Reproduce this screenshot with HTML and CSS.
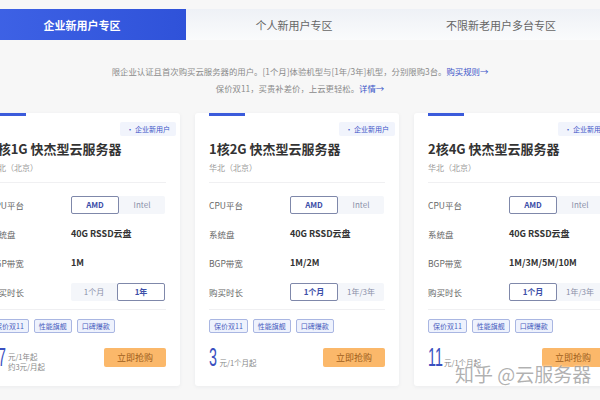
FILE: index.html
```html
<!DOCTYPE html>
<html lang="zh-CN">
<head>
<meta charset="utf-8">
<title>企业新用户专区</title>
<link rel="stylesheet" href="styles.css">
</head>
<body>
<div class="page">
  <div class="tabs">
    <div class="tab tab-active tab-a">企业新用户专区</div>
    <div class="tab tab-b">个人新用户专区</div>
    <div class="tab tab-c">不限新老用户多台专区</div>
  </div>

  <div class="desc">
    <p>限企业认证且首次购买云服务器的用户。[1个月]体验机型与[1年/3年]机型，分别限购3台。<a class="link">购买规则→</a></p>
    <p>保价双11，买贵补差价，上云更轻松。<a class="link">详情→</a></p>
  </div>

  <div class="cards">
    <div class="card">
      <div class="accent"></div>
      <div class="badge">· 企业新用户</div>
      <div class="title">1核1G 快杰型云服务器</div>
      <div class="region">华北（北京）</div>
      <div class="rows">
        <div class="row"><span class="label">CPU平台</span><div class="seg"><span class="opt sel">AMD</span><span class="opt">Intel</span></div></div>
        <div class="row"><span class="label">系统盘</span><span class="value">40G RSSD云盘</span></div>
        <div class="row"><span class="label">BGP带宽</span><span class="value">1M</span></div>
        <div class="row"><span class="label">购买时长</span><div class="seg"><span class="opt">1个月</span><span class="opt sel">1年</span></div></div>
      </div>
      <div class="tags"><span class="tag">保价双11</span><span class="tag">性能旗舰</span><span class="tag">口碑爆款</span></div>
      <div class="foot">
        <div class="price"><span class="num num2">37</span><span class="unit unit-two"><span>元/1年起</span><span>约3元/月起</span></span></div>
        <button class="buy">立即抢购</button>
      </div>
    </div>

    <div class="card">
      <div class="accent"></div>
      <div class="badge">· 企业新用户</div>
      <div class="title">1核2G 快杰型云服务器</div>
      <div class="region">华北（北京）</div>
      <div class="rows">
        <div class="row"><span class="label">CPU平台</span><div class="seg"><span class="opt sel">AMD</span><span class="opt">Intel</span></div></div>
        <div class="row"><span class="label">系统盘</span><span class="value">40G RSSD云盘</span></div>
        <div class="row"><span class="label">BGP带宽</span><span class="value">1M/2M</span></div>
        <div class="row"><span class="label">购买时长</span><div class="seg"><span class="opt sel">1个月</span><span class="opt">1年/3年</span></div></div>
      </div>
      <div class="tags"><span class="tag">保价双11</span><span class="tag">性能旗舰</span><span class="tag">口碑爆款</span></div>
      <div class="foot">
        <div class="price"><span class="num num1">3</span><span class="unit">元/1个月起</span></div>
        <button class="buy">立即抢购</button>
      </div>
    </div>

    <div class="card">
      <div class="accent"></div>
      <div class="badge">· 企业新用户</div>
      <div class="title">2核4G 快杰型云服务器</div>
      <div class="region">华北（北京）</div>
      <div class="rows">
        <div class="row"><span class="label">CPU平台</span><div class="seg"><span class="opt sel">AMD</span><span class="opt">Intel</span></div></div>
        <div class="row"><span class="label">系统盘</span><span class="value">40G RSSD云盘</span></div>
        <div class="row"><span class="label">BGP带宽</span><span class="value">1M/3M/5M/10M</span></div>
        <div class="row"><span class="label">购买时长</span><div class="seg"><span class="opt sel">1个月</span><span class="opt">1年/3年</span></div></div>
      </div>
      <div class="tags"><span class="tag">保价双11</span><span class="tag">性能旗舰</span><span class="tag">口碑爆款</span></div>
      <div class="foot">
        <div class="price"><span class="num num2">11</span><span class="unit">元/1个月起</span></div>
        <button class="buy">立即抢购</button>
      </div>
    </div>
  </div>

  <div class="watermark">知乎 @云服务器</div>
</div>
</body>
</html>
```

FILE: styles.css
```css
* { box-sizing: border-box; }
html, body { margin: 0; padding: 0; }
body {
  width: 600px;
  height: 400px;
  overflow: hidden;
  background: #f7f7f7;
  font-family: "Noto Sans CJK SC", "Noto Sans", sans-serif;
  color: #333;
}
.page {
  position: relative;
  width: 600px;
  height: 400px;
  padding-top: 9px;
}
.tabs {
  display: flex;
  margin-left: -22px;
  height: 31px;
}
.tab {
  display: flex;
  align-items: center;
  justify-content: center;
  font-size: 11px;
  color: #666;
  background: linear-gradient(180deg, #eef1f6 0%, #fafbfc 100%);
}
.tab-a { width: 212px; }
.tab-b { width: 220px; }
.tab-c { width: 202px; }
.tab-active {
  background: linear-gradient(90deg, #3f63e6 0%, #2f52d9 100%);
  color: #fff;
  font-weight: 700;
}
.desc {
  margin-top: 23px;
  text-align: center;
  font-size: 8.4px;
  color: #8a8a8a;
  line-height: 17px;
}
.desc p { margin: 0; }
.link { color: #3b55c8; }

.cards {
  display: flex;
  gap: 15px;
  margin-left: -24px;
  margin-top: 16px;
}
.card {
  position: relative;
  width: 204px;
  height: 273px;
  flex: none;
  background: #fff;
  border-radius: 3px;
  box-shadow: 0 1px 4px rgba(40, 50, 80, 0.06);
  padding: 0 14px;
}
.accent {
  width: 36px;
  height: 3px;
  background: #3b5bdb;
}
.badge {
  position: absolute;
  top: 9px;
  right: 4px;
  height: 14px;
  line-height: 14px;
  padding: 0 6px;
  font-size: 7px;
  color: #3b55c8;
  background: #f1f4fc;
  border-radius: 2px;
}
.title {
  margin-top: 24px;
  font-size: 13px;
  font-weight: 700;
  color: #333;
  line-height: 18px;
}
.region {
  margin-top: 3px;
  font-size: 8px;
  color: #999;
  line-height: 14px;
}
.rows {
  margin-top: 7px;
  border-top: 1px solid #f0f0f2;
  border-bottom: 1px solid #f0f0f2;
  padding: 7px 0 3px;
}
.row {
  display: flex;
  align-items: center;
  height: 29px;
}
.label {
  width: 81px;
  font-size: 8.5px;
  color: #666;
}
.value {
  font-size: 9px;
  font-weight: 700;
  color: #333;
}
.seg {
  display: flex;
  width: 94px;
  height: 18px;
  background: #f4f6fa;
  border-radius: 2px;
}
.opt {
  flex: 1;
  display: flex;
  align-items: center;
  justify-content: center;
  font-size: 8px;
  color: #8a8fa8;
}
.opt.sel {
  background: #fff;
  border: 1px solid #7f88aa;
  border-radius: 2px;
  color: #3d4fa8;
  font-weight: 700;
}
.tags {
  display: flex;
  gap: 5px;
  margin-top: 9px;
}
.tag {
  height: 14px;
  line-height: 12px;
  padding: 0 4px;
  font-size: 7px;
  color: #4a5fc0;
  background: #eef2fd;
  border: 1px solid #a9b6e2;
  border-radius: 2px;
}
.foot {
  display: flex;
  justify-content: space-between;
  align-items: center;
  margin-top: 13px;
}
.price {
  display: flex;
  align-items: flex-end;
  height: 22px;
}
.num {
  display: inline-block;
  font-family: "Liberation Sans", sans-serif;
  font-size: 26px;
  line-height: 22px;
  color: #3a4fc0;
  transform: scaleX(0.55);
  transform-origin: left bottom;
}
.num1 { margin-right: -5px; }
.num2 { margin-right: -12px; }
.unit {
  font-size: 7.5px;
  color: #888;
  line-height: 10px;
  margin-left: 1px;
}
.unit-two {
  display: flex;
  flex-direction: column;
  margin-bottom: -4px;
}
.buy {
  width: 62px;
  height: 19px;
  border: none;
  border-radius: 2px;
  background: #fbb86a;
  color: #a05f1c;
  font-family: inherit;
  font-size: 9px;
  padding: 0;
}
.watermark {
  position: absolute;
  left: 455px;
  top: 360px;
  font-size: 19px;
  color: rgba(110, 110, 110, 0.55);
  text-shadow: 0 0 2px rgba(255, 255, 255, 0.9);
  white-space: nowrap;
}
```
